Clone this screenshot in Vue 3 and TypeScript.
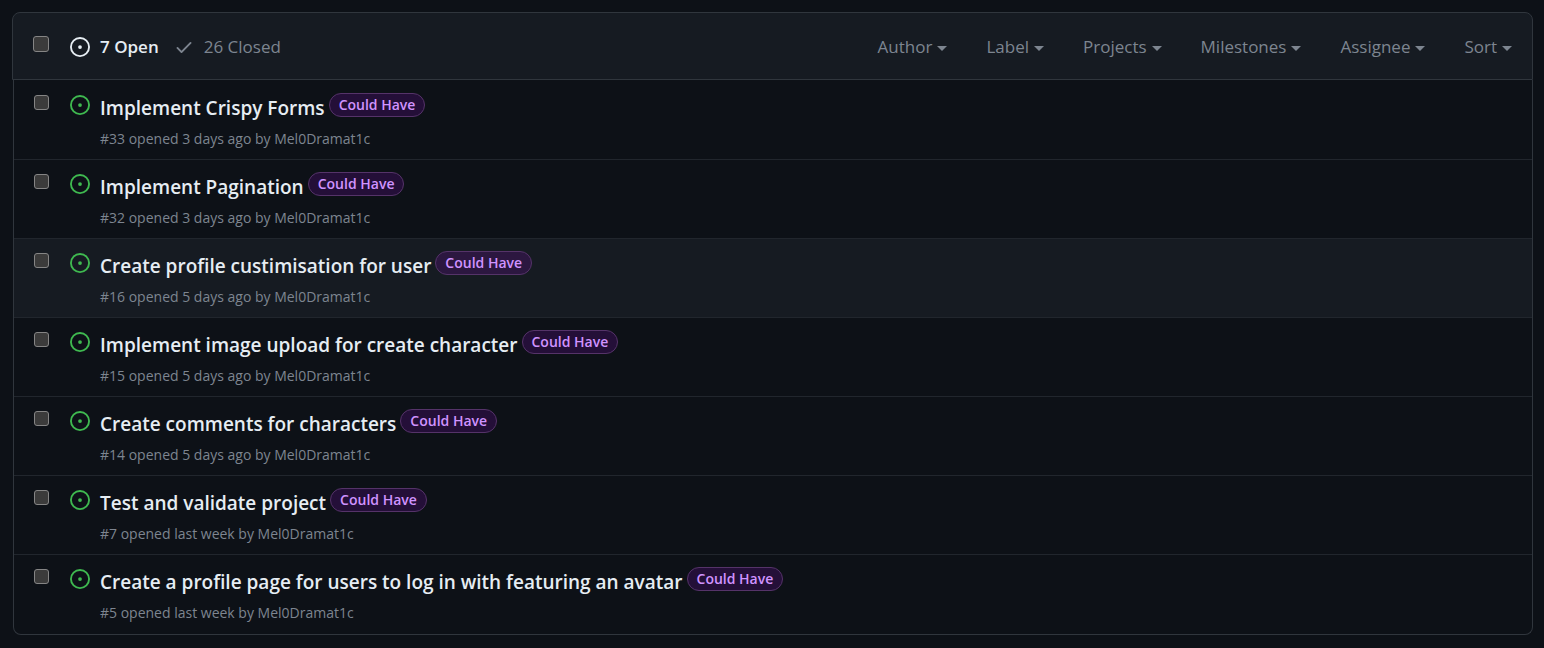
<script setup lang="ts">
import { ref } from 'vue'

interface Issue {
  id: number
  title: string
  opened: string
  author: string
  label: string
}

const filters: string[] = ['Author', 'Label', 'Projects', 'Milestones', 'Assignee', 'Sort']

const issues: Issue[] = [
  { id: 33, title: 'Implement Crispy Forms', opened: '3 days ago', author: 'Mel0Dramat1c', label: 'Could Have' },
  { id: 32, title: 'Implement Pagination', opened: '3 days ago', author: 'Mel0Dramat1c', label: 'Could Have' },
  { id: 16, title: 'Create profile custimisation for user', opened: '5 days ago', author: 'Mel0Dramat1c', label: 'Could Have' },
  { id: 15, title: 'Implement image upload for create character', opened: '5 days ago', author: 'Mel0Dramat1c', label: 'Could Have' },
  { id: 14, title: 'Create comments for characters', opened: '5 days ago', author: 'Mel0Dramat1c', label: 'Could Have' },
  { id: 7, title: 'Test and validate project', opened: 'last week', author: 'Mel0Dramat1c', label: 'Could Have' },
  { id: 5, title: 'Create a profile page for users to log in with featuring an avatar', opened: 'last week', author: 'Mel0Dramat1c', label: 'Could Have' },
]

const selected = ref<number[]>([])
const activeId = ref(16)

function toggleAll(event: Event): void {
  const checked = (event.target as HTMLInputElement).checked
  selected.value = checked ? issues.map((issue) => issue.id) : []
}
</script>

<template>
  <main class="panel">
    <header class="toolbar">
      <input
        class="check check-all"
        type="checkbox"
        aria-label="Select all issues"
        :checked="selected.length === issues.length"
        @change="toggleAll"
      />
      <nav class="states" aria-label="Issue state">
        <a class="state state-open" href="#open">
          <svg class="icon" viewBox="0 0 16 16" aria-hidden="true">
            <path d="M8 9.5a1.5 1.5 0 1 0 0-3 1.5 1.5 0 0 0 0 3Z" />
            <path d="M8 0a8 8 0 1 1 0 16A8 8 0 0 1 8 0ZM1.5 8a6.5 6.5 0 1 0 13 0 6.5 6.5 0 0 0-13 0Z" />
          </svg>
          <span>7 Open</span>
        </a>
        <a class="state" href="#closed">
          <svg class="icon" viewBox="0 0 16 16" aria-hidden="true">
            <path d="M13.78 4.22a.75.75 0 0 1 0 1.06l-7.25 7.25a.75.75 0 0 1-1.06 0L2.22 9.28a.751.751 0 0 1 .018-1.042.751.751 0 0 1 1.042-.018L6 10.94l6.72-6.72a.75.75 0 0 1 1.06 0Z" />
          </svg>
          <span>26 Closed</span>
        </a>
      </nav>
      <div class="filters">
        <button v-for="name in filters" :key="name" class="filter" type="button">
          <span>{{ name }}</span>
          <span class="caret"></span>
        </button>
      </div>
    </header>

    <ul class="issues">
      <li
        v-for="issue in issues"
        :key="issue.id"
        class="issue"
        :class="{ active: issue.id === activeId }"
        @mouseenter="activeId = issue.id"
      >
        <input
          v-model="selected"
          class="check"
          type="checkbox"
          :value="issue.id"
          :aria-label="`Select ${issue.title}`"
        />
        <svg class="icon icon-open" viewBox="0 0 16 16" aria-hidden="true">
          <path d="M8 9.5a1.5 1.5 0 1 0 0-3 1.5 1.5 0 0 0 0 3Z" />
          <path d="M8 0a8 8 0 1 1 0 16A8 8 0 0 1 8 0ZM1.5 8a6.5 6.5 0 1 0 13 0 6.5 6.5 0 0 0-13 0Z" />
        </svg>
        <div class="body">
          <div class="heading">
            <a class="title" :href="`#issue-${issue.id}`">{{ issue.title }}</a>
            <a class="label" href="#could-have">{{ issue.label }}</a>
          </div>
          <p class="meta">
            #{{ issue.id }} opened {{ issue.opened }} by <a class="author" href="#author">{{ issue.author }}</a>
          </p>
        </div>
      </li>
    </ul>
  </main>
</template>

<style>
body {
  background: #0d1117;
}
</style>

<style scoped>
.panel {
  margin: 12px 11px 13px 12px;
  color: #7d8590;
  font-family: "Segoe UI", "Open Sans", "Noto Sans", sans-serif;
}

.toolbar {
  display: flex;
  align-items: center;
  min-height: 68px;
  padding: 2px 20px 0;
  box-sizing: border-box;
  border: 1px solid #30363d;
  border-radius: 8px 8px 0 0;
  background: #161b22;
  font-size: 17px;
  line-height: 24px;
}

.check {
  appearance: none;
  flex: none;
  width: 15px;
  height: 15px;
  margin: 0;
  box-sizing: border-box;
  border: 1px solid #858585;
  border-radius: 3px;
  background: #3b3b3b;
}

.check:checked {
  background: #2f81f7;
}

.check-all {
  width: 16px;
  height: 16px;
  margin: 0 21px 6px 0;
}

.states {
  display: flex;
  gap: 15px;
}

.state {
  display: flex;
  align-items: center;
  gap: 10px;
  color: inherit;
  text-decoration: none;
  white-space: nowrap;
}

.state-open {
  color: #e6edf3;
  font-weight: 600;
}

.icon {
  flex: none;
  width: 20px;
  height: 20px;
  fill: currentColor;
}

.filters {
  display: flex;
  gap: 39px;
  margin-left: auto;
}

.filter {
  display: flex;
  align-items: center;
  gap: 5px;
  padding: 0;
  border: 0;
  background: none;
  color: inherit;
  font: inherit;
  white-space: nowrap;
}

.caret {
  margin-top: 3px;
  border: 5px solid transparent;
  border-top-color: currentColor;
  border-bottom: 0;
}

.issues {
  margin: 0 0 0 1px;
  padding: 1px 0 0;
  border: 1px solid #30363d;
  border-top: 0;
  border-radius: 0 0 8px 8px;
  list-style: none;
}

.issue {
  display: flex;
  align-items: flex-start;
  min-height: 79px;
  padding: 0 20px;
  box-sizing: border-box;
  border-bottom: 1px solid #21262d;
}

.issue:last-child {
  border-bottom: 0;
}

.active {
  background: #161b22;
}

.issue .check {
  margin: 14px 21px 0 0;
}

.icon-open {
  margin: 14px 10px 0 0;
  color: #3fb950;
}

.body {
  min-width: 0;
}

.heading {
  display: flex;
  align-items: flex-start;
  gap: 4px;
  padding-top: 12px;
}

.title {
  color: #e6edf3;
  font-size: 19px;
  font-weight: 600;
  line-height: 30px;
  text-decoration: none;
}

.label {
  flex: none;
  padding: 0 9px;
  border: 1px solid #553369;
  border-radius: 12px;
  background: #240f38;
  color: #d093ff;
  font-size: 14px;
  font-weight: 600;
  line-height: 22px;
  text-decoration: none;
}

.active .label {
  background: #2c1740;
}

.meta {
  margin: 5px 0 0;
  font-size: 14px;
  line-height: 22px;
}

.author {
  color: inherit;
  text-decoration: none;
}
</style>
